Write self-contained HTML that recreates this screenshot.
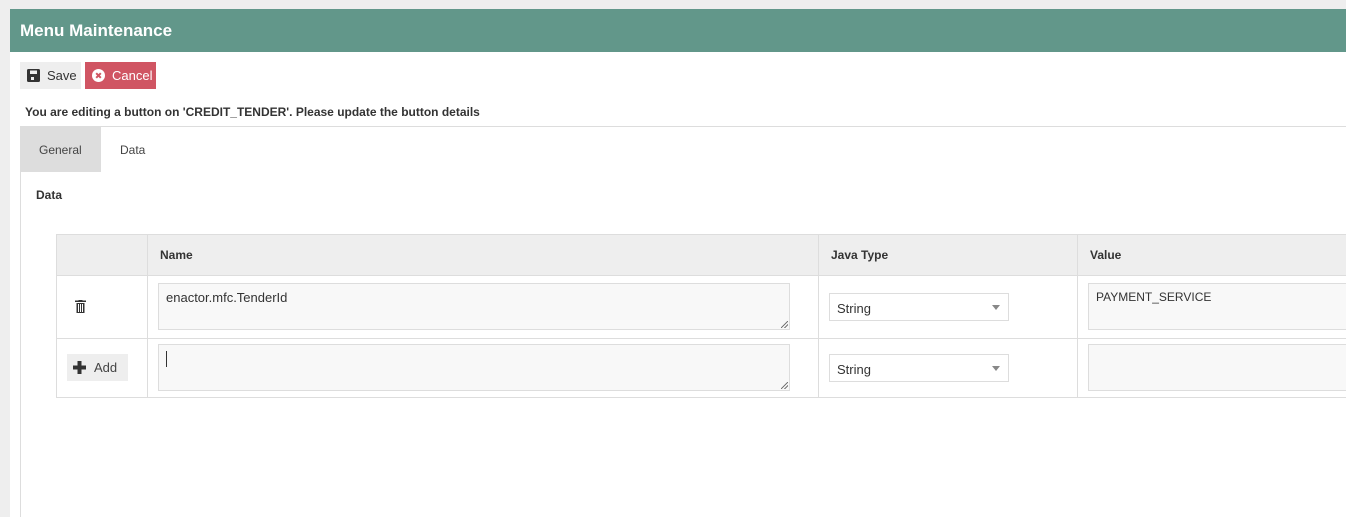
<!DOCTYPE html>
<html><head><style>
body{margin:0;width:1346px;height:517px;background:#eee;font-family:"Liberation Sans",sans-serif;overflow:hidden;position:relative;color:#333}
.a{position:absolute;box-sizing:border-box}
.hdr{left:10px;top:9px;width:1336px;height:43px;background:#62978a;color:#fff;font-weight:bold;font-size:17px;padding:12px 0 0 10px}
.main{left:10px;top:52px;width:1336px;height:465px;background:#fff}
.btn{font-size:13px;padding:7px 0 0 0}
th,td{border:1px solid #ddd}
.ta{background:#f8f8f8;border:1px solid #ddd;font-size:13px;padding:6px 7px}
.sel{background:#fff;border:1px solid #ddd;font-size:13px;padding:7px 7px}
.arr{position:absolute;right:8px;top:11px;width:0;height:0;border-left:4px solid transparent;border-right:4px solid transparent;border-top:5px solid #888}
.grip{position:absolute;right:1px;bottom:1px;width:7px;height:7px;background:linear-gradient(135deg,transparent 45%,#777 45%,#777 55%,transparent 55%,transparent 70%,#777 70%,#777 80%,transparent 80%)}
.th{font-weight:bold;font-size:12px;top:248px}
</style></head><body>
<div class="a hdr">Menu Maintenance</div>
<div class="a main"></div>
<div class="a btn" style="left:20px;top:62px;width:61px;height:27px;background:#eee;color:#333">
<svg class="a" style="left:7px;top:7px" width="13" height="13" viewBox="0 0 13 13"><rect x="0" y="0" width="13" height="13" rx="1.5" fill="#333"/><rect x="3" y="1.5" width="7" height="3.5" fill="#eee"/><rect x="4" y="8" width="3" height="3" fill="#eee"/></svg>
<span style="position:absolute;left:27px;top:6px">Save</span></div>
<div class="a btn" style="left:85px;top:62px;width:71px;height:27px;background:#d05563;color:#fff">
<svg class="a" style="left:7px;top:7px" width="13" height="13" viewBox="0 0 13 13"><circle cx="6.5" cy="6.5" r="6.5" fill="#fff"/><path d="M4.2 4.2L8.8 8.8M8.8 4.2L4.2 8.8" stroke="#d05563" stroke-width="2"/></svg>
<span style="position:absolute;left:27px;top:6px">Cancel</span></div>
<div class="a" style="left:25px;top:105px;font-size:12px;font-weight:bold;color:#333">You are editing a button on 'CREDIT_TENDER'. Please update the button details</div>
<div class="a" style="left:20px;top:126px;width:1326px;height:391px;border-top:1px solid #ddd;border-left:1px solid #ddd"></div>
<div class="a" style="left:21px;top:127px;width:80px;height:45px;background:#ddd;font-size:12px;padding:16px 0 0 18px;color:#444">General</div>
<div class="a" style="left:120px;top:143px;font-size:12px;color:#444">Data</div>
<div class="a" style="left:36px;top:188px;font-size:12px;font-weight:bold">Data</div>
<div class="a" style="left:56px;top:234px;width:1300px;height:42px;background:#eee;border:1px solid #ddd"></div>
<div class="a" style="left:56px;top:275px;width:1300px;height:64px;border:1px solid #ddd;border-top:none"></div>
<div class="a" style="left:56px;top:338px;width:1300px;height:60px;border:1px solid #ddd"></div>
<div class="a" style="left:147px;top:234px;width:1px;height:164px;background:#ddd"></div>
<div class="a" style="left:818px;top:234px;width:1px;height:164px;background:#ddd"></div>
<div class="a" style="left:1077px;top:234px;width:1px;height:164px;background:#ddd"></div>
<div class="a th" style="left:160px">Name</div>
<div class="a th" style="left:831px">Java Type</div>
<div class="a th" style="left:1090px">Value</div>
<svg class="a" style="left:75px;top:300px" width="11" height="13" viewBox="0 0 11 13"><rect x="0" y="0.5" width="11" height="1.5" fill="#333"/><rect x="3.5" y="0" width="4" height="1" fill="#333"/><path d="M1.5 3H9.5V13H1.5Z M3 4V12H4V4Z M5 4V12H6V4Z M7 4V12H8V4Z" fill="#333" fill-rule="evenodd"/></svg>
<div class="a" style="left:67px;top:354px;width:61px;height:27px;background:#eee;font-size:13px">
<svg class="a" style="left:6px;top:7px" width="13" height="13" viewBox="0 0 13 13"><path d="M4.5 0H8.5V4.5H13V8.5H8.5V13H4.5V8.5H0V4.5H4.5Z" fill="#333"/></svg>
<span style="position:absolute;left:27px;top:6px;color:#444">Add</span></div>
<div class="a ta" style="left:158px;top:283px;width:632px;height:47px">enactor.mfc.TenderId<div class="grip"></div></div>
<div class="a ta" style="left:158px;top:344px;width:632px;height:47px"><span style="display:inline-block;width:1px;height:16px;background:#333"></span><div class="grip"></div></div>
<div class="a sel" style="left:829px;top:293px;width:180px;height:28px">String<div class="arr"></div></div>
<div class="a sel" style="left:829px;top:354px;width:180px;height:28px">String<div class="arr"></div></div>
<div class="a ta" style="left:1088px;top:283px;width:270px;height:47px;font-size:12px">PAYMENT_SERVICE</div>
<div class="a ta" style="left:1088px;top:344px;width:270px;height:47px"></div>
</body></html>
